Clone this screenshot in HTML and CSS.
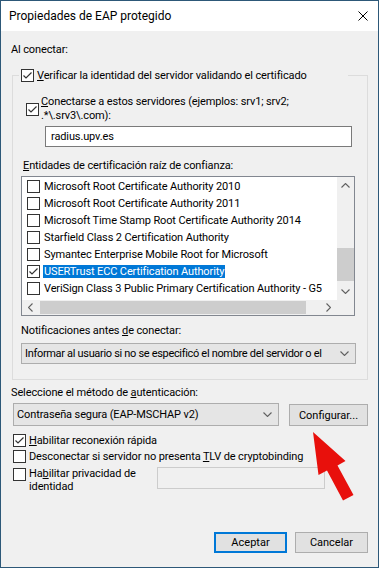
FILE: index.html
```html
<!DOCTYPE html>
<html lang="es">
<head>
    <meta charset="UTF-8">
    <meta name="viewport" content="width=device-width, initial-scale=1.0">
    <title>Propiedades de EAP protegido</title>
    <link rel="stylesheet" href="styles.css">
</head>
<body>
    <div class="window">
        <div class="titlebar">
            <span>Propiedades de EAP protegido</span>
            <svg class="close" width="10" height="10" viewBox="0 0 10 10">
                <path d="M0.5 0.5 L9.5 9.5 M9.5 0.5 L0.5 9.5" stroke="#000" stroke-width="1" fill="none"/>
            </svg>
        </div>

        <div class="content">
            <div class="caption caption-top">Al conectar:</div>

            <fieldset class="group">
                <legend>
                    <label class="check">
                        <span class="box"><svg width="11" height="11" viewBox="0 0 11 11"><polyline points="1.5,5.5 4,8 9.5,2.5" /></svg></span>
                        <span><u>V</u>erificar la identidad del servidor validando el certificado</span>
                    </label>
                </legend>

                <label class="check servers">
                    <span class="box"><svg width="11" height="11" viewBox="0 0 11 11"><polyline points="1.5,5.5 4,8 9.5,2.5" /></svg></span>
                    <span><u>C</u>onectarse a estos servidores (ejemplos: srv1; srv2;<br>.*\.srv3\.com):</span>
                </label>
                <div class="textbox">radius.upv.es</div>

                <div class="caption entities"><u>E</u>ntidades de certificación raíz de confianza:</div>
                <div class="listbox">
                    <div class="list-main">
                        <div class="list-items">
                            <div class="row"><span class="box"></span><span>Microsoft Root Certificate Authority 2010</span></div>
                            <div class="row"><span class="box"></span><span>Microsoft Root Certificate Authority 2011</span></div>
                            <div class="row"><span class="box"></span><span>Microsoft Time Stamp Root Certificate Authority 2014</span></div>
                            <div class="row"><span class="box"></span><span>Starfield Class 2 Certification Authority</span></div>
                            <div class="row"><span class="box"></span><span>Symantec Enterprise Mobile Root for Microsoft</span></div>
                            <div class="row"><span class="box"><svg width="11" height="11" viewBox="0 0 11 11"><polyline points="1.5,5.5 4,8 9.5,2.5" /></svg></span><span class="sel">USERTrust ECC Certification Authority</span></div>
                            <div class="row"><span class="box"></span><span>VeriSign Class 3 Public Primary Certification Authority - G5</span></div>
                        </div>
                        <div class="vscroll">
                            <div class="arrow"><svg width="9" height="5" viewBox="0 0 9 5"><polyline points="0.5,4.5 4.5,0.5 8.5,4.5" /></svg></div>
                            <div class="vtrack"><div class="vthumb"></div></div>
                            <div class="arrow"><svg width="9" height="5" viewBox="0 0 9 5"><polyline points="0.5,0.5 4.5,4.5 8.5,0.5" /></svg></div>
                        </div>
                    </div>
                    <div class="hscroll">
                        <div class="arrow"><svg width="5" height="9" viewBox="0 0 5 9"><polyline points="4.5,0.5 0.5,4.5 4.5,8.5" /></svg></div>
                        <div class="htrack"><div class="hthumb"></div></div>
                        <div class="arrow"><svg width="5" height="9" viewBox="0 0 5 9"><polyline points="0.5,0.5 4.5,4.5 0.5,8.5" /></svg></div>
                        <div class="corner"></div>
                    </div>
                </div>

                <div class="caption notify">Notificaciones antes <u>d</u>e conectar:</div>
                <div class="combo notify-combo">
                    <span class="combo-text">Informar al usuario si no se especificó el nombre del servidor o el</span>
                    <svg class="chev" width="9" height="5" viewBox="0 0 9 5"><polyline points="0.5,0.5 4.5,4.5 8.5,0.5" /></svg>
                </div>
            </fieldset>

            <div class="caption method">Seleccione el método de <u>a</u>utenticación:</div>
            <div class="method-row">
                <div class="combo method-combo">
                    <span class="combo-text">Contraseña segura (EAP-MSCHAP v2)</span>
                    <svg class="chev" width="9" height="5" viewBox="0 0 9 5"><polyline points="0.5,0.5 4.5,4.5 8.5,0.5" /></svg>
                </div>
                <button class="btn config">Confi<u>g</u>urar...</button>
            </div>

            <label class="check opt">
                <span class="box"><svg width="11" height="11" viewBox="0 0 11 11"><polyline points="1.5,5.5 4,8 9.5,2.5" /></svg></span>
                <span><u>H</u>abilitar reconexión rápida</span>
            </label>
            <label class="check opt">
                <span class="box"></span>
                <span>Desconectar si servidor no presenta <u>T</u>LV de cryptobinding</span>
            </label>
            <div class="privacy">
                <label class="check opt-multi">
                    <span class="box"></span>
                    <span>Ha<u>b</u>ilitar privacidad de<br>identidad</span>
                </label>
                <div class="field-disabled"></div>
            </div>

            <div class="footer">
                <button class="btn default">Aceptar</button>
                <button class="btn">Cancelar</button>
            </div>
        </div>

        <!-- red arrow pointing at Configurar -->
        <svg class="pointer" width="379" height="568" viewBox="0 0 379 568">
            <polygon points="313,432 345.5,461 337.5,465.5 353.5,495 343,500.5 327,470.5 318.5,475" fill="#e8100c"/>
        </svg>
    </div>
</body>
</html>
```

FILE: styles.css
```css
* {
    box-sizing: border-box;
}
body {
    margin: 0;
    font-family: Roboto, "Segoe UI", Arial, sans-serif;
    font-size: 11px;
    letter-spacing: -0.12px;
    color: #000;
    background-color: #f0f0f0;
}
u {
    text-decoration: underline;
    text-underline-offset: 1px;
}
.window {
    position: relative;
    width: 379px;
    height: 568px;
    border: 1px solid #2d5878;
    background-color: #f0f0f0;
    display: flex;
    flex-direction: column;
    overflow: hidden;
}
.titlebar {
    height: 30px;
    flex: none;
    background-color: #fff;
    display: flex;
    align-items: center;
    justify-content: space-between;
    padding: 0 10px 0 8px;
    font-size: 12px;
    letter-spacing: 0;
}
.close {
    margin-top: -1px;
}
.content {
    flex: 1;
    display: flex;
    flex-direction: column;
    align-items: flex-start;
    padding: 0 10px 14px 10px;
}
.caption {
    line-height: 15px;
    white-space: nowrap;
}
.caption-top {
    margin-top: 11px;
}
.group {
    margin: 11px 0 0 1px;
    width: 356px;
    min-width: 0;
    padding: 0 11px 15px 8px;
    border: 1px solid #dcdcdc;
}
.group legend {
    width: 329px;
    padding: 0 2px;
    margin-left: -2px;
    line-height: 15px;
}
.check {
    display: flex;
    align-items: center;
    gap: 3px;
    white-space: nowrap;
}
.box {
    width: 13px;
    height: 13px;
    flex: none;
    border: 1px solid #333;
    background-color: #fff;
    display: flex;
    align-items: center;
    justify-content: center;
}
.box polyline {
    fill: none;
    stroke: #333;
    stroke-width: 1.2;
}
.servers {
    margin: 12px 0 0 5px;
    line-height: 14px;
    gap: 2px;
}
.textbox {
    margin: 3px 0 0 24px;
    width: 307px;
    height: 21px;
    border: 1px solid #7a7a7a;
    background-color: #fff;
    padding: 0 5px;
    line-height: 19px;
}
.entities {
    margin: 11px 0 0 2px;
}
.listbox {
    margin-top: 3px;
    width: 334px;
    height: 140px;
    border: 1px solid #828790;
    background-color: #fff;
    display: flex;
    flex-direction: column;
}
.list-main {
    flex: 1;
    display: flex;
    min-height: 0;
}
.list-items {
    flex: 1;
    overflow: hidden;
    padding-top: 1px;
}
.row {
    height: 17px;
    display: flex;
    align-items: center;
    gap: 4px;
    padding-left: 5px;
    white-space: nowrap;
}
.sel {
    background-color: #0078d7;
    color: #fff;
    line-height: 13px;
    padding: 0 1px;
    margin-left: -1px;
}
.vscroll {
    width: 17px;
    flex: none;
    background-color: #f0f0f0;
    display: flex;
    flex-direction: column;
}
.arrow {
    width: 17px;
    height: 17px;
    flex: none;
    display: flex;
    align-items: center;
    justify-content: center;
}
.arrow polyline, .chev polyline {
    fill: none;
    stroke: #606060;
    stroke-width: 1.1;
}
.vtrack {
    flex: 1;
}
.vthumb {
    margin: 54px auto 0;
    width: 17px;
    height: 33px;
    background-color: #cdcdcd;
}
.hscroll {
    height: 15px;
    flex: none;
    display: flex;
    background-color: #f0f0f0;
}
.hscroll .arrow {
    height: 15px;
}
.htrack {
    flex: 1;
    display: flex;
    align-items: center;
}
.hthumb {
    margin-left: 1px;
    width: 266px;
    height: 13px;
    background-color: #cdcdcd;
}
.corner {
    width: 17px;
    background-color: #f0f0f0;
}
.notify {
    margin-top: 7px;
}
.combo {
    display: flex;
    align-items: center;
    gap: 6px;
    background-color: #e5e5e5;
    border: 1px solid #adadad;
    padding: 0 6px 0 3px;
    white-space: nowrap;
}
.combo-text {
    flex: 1;
    min-width: 0;
}
.chev {
    flex: none;
}
.notify-combo {
    margin-top: 5px;
    width: 335px;
    height: 21px;
}
.notify-combo .combo-text {
    letter-spacing: -0.32px;
}
.method {
    margin-top: 5px;
}
.method-row {
    display: flex;
    align-items: flex-start;
    margin-top: 3px;
}
.method-combo {
    margin-left: 2px;
    width: 266px;
    height: 23px;
}
.btn {
    font: inherit;
    color: #000;
    background-color: #e1e1e1;
    border: 1px solid #adadad;
    padding: 0;
    display: flex;
    align-items: center;
    justify-content: center;
}
.config {
    margin: 1px 0 0 10px;
    width: 79px;
    height: 22px;
}
.opt {
    margin-left: 2px;
    height: 16px;
}
.opt:first-of-type {
    margin-top: 6px;
}
.privacy {
    display: flex;
    align-items: flex-start;
    margin: 3px 0 0 2px;
}
.opt-multi {
    width: 144px;
    align-items: flex-start;
    line-height: 13px;
}
.opt-multi .box {
    margin-top: 1px;
}
.field-disabled {
    width: 168px;
    height: 22px;
    border: 1px solid #cccccc;
    background-color: #f0f0f0;
}
.footer {
    margin-top: auto;
    align-self: flex-end;
    display: flex;
    gap: 8px;
}
.footer .btn {
    width: 73px;
    height: 21px;
}
.btn.default {
    border: 2px solid #0078d7;
}
.pointer {
    position: absolute;
    left: -1px;
    top: -1px;
    pointer-events: none;
}
```
